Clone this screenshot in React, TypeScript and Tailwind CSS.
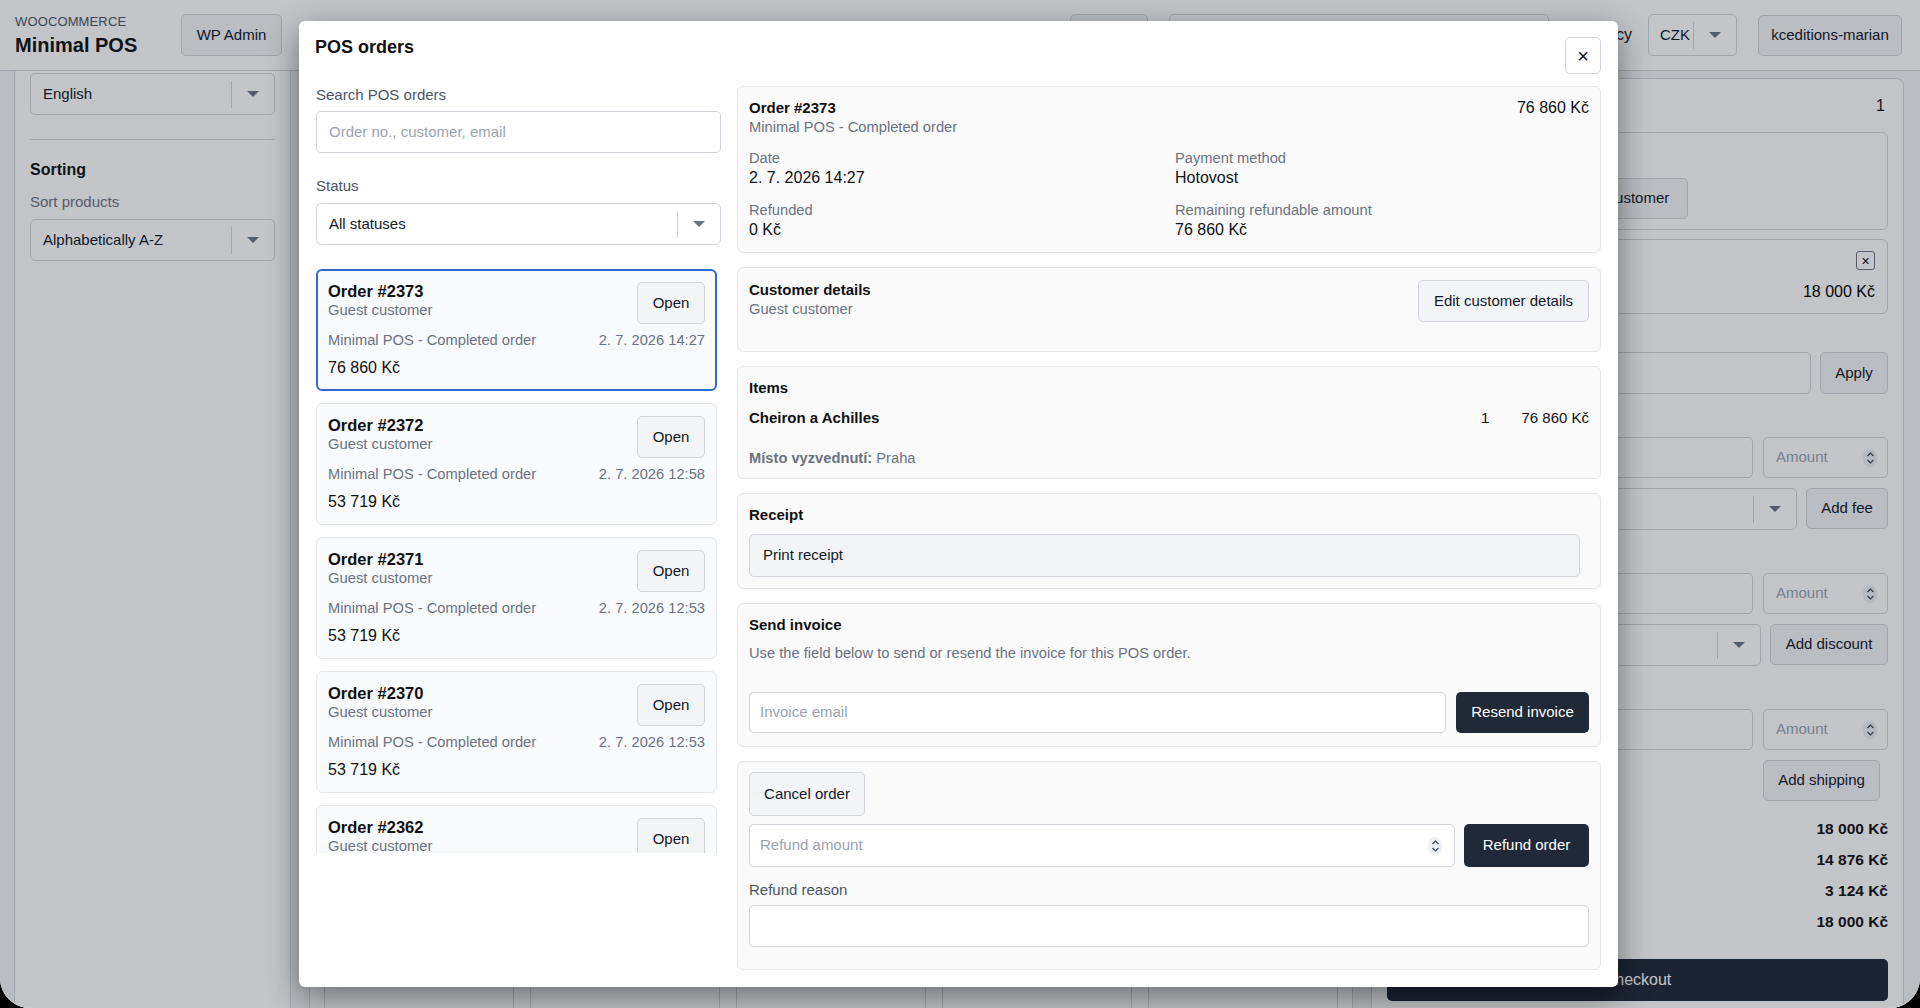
import React from "react";

type Order = {
  id: string;
  date: string;
  total: string;
};

const orders: Order[] = [
  { id: "2373", date: "2. 7. 2026 14:27", total: "76 860 Kč" },
  { id: "2372", date: "2. 7. 2026 12:58", total: "53 719 Kč" },
  { id: "2371", date: "2. 7. 2026 12:53", total: "53 719 Kč" },
  { id: "2370", date: "2. 7. 2026 12:53", total: "53 719 Kč" },
  { id: "2362", date: "2. 7. 2026 12:41", total: "53 719 Kč" },
];

function Caret() {
  return (
    <svg width="12" height="6" viewBox="0 0 12 6">
      <path d="M0 0h12L6 6z" fill="#6b7280" />
    </svg>
  );
}

function Spinner() {
  return (
    <span className="flex h-[18px] w-[14px] items-center justify-center rounded-full bg-[#eef0f2]">
      <svg width="9" height="14" viewBox="0 0 9 14">
        <path d="M1.5 5L4.5 2L7.5 5M1.5 9L4.5 12L7.5 9" stroke="#374151" strokeWidth="1.2" fill="none" />
      </svg>
    </span>
  );
}

function SelectBox({ value, className = "" }: { value: string; className?: string }) {
  return (
    <div
      className={`flex h-[42px] items-center rounded-[5px] border border-[#d1d5db] bg-white pl-3 text-[15px] text-[#111827] ${className}`}
    >
      <span className="flex-1 truncate">{value}</span>
      <span className="h-[27px] w-px bg-[#d1d5db]" />
      <span className="flex w-[42px] justify-center">
        <Caret />
      </span>
    </div>
  );
}

function GrayButton({ children, className = "" }: { children: React.ReactNode; className?: string }) {
  return (
    <button
      className={`flex items-center justify-center rounded-[5px] border border-[#d1d5db] bg-[#f3f4f6] text-[15px] text-[#111827] ${className}`}
    >
      {children}
    </button>
  );
}

function DarkButton({ children, className = "" }: { children: React.ReactNode; className?: string }) {
  return (
    <button
      className={`flex items-center justify-center rounded-[5px] bg-[#1f2937] text-[15px] text-white ${className}`}
    >
      {children}
    </button>
  );
}

function AmountInput() {
  return (
    <div className="flex h-[41px] w-[125px] items-center justify-between rounded-[5px] border border-[#d1d5db] bg-white pl-3 pr-[10px] text-[15px] text-[#9ca3af]">
      Amount
      <Spinner />
    </div>
  );
}

function OrderCard({ order, active }: { order: Order; active: boolean }) {
  return (
    <div
      className={`h-[122px] shrink-0 rounded-[6px] bg-[#f9fafb] ${
        active ? "border-2 border-[#3366d6] p-[10px]" : "border border-[#e5e7eb] p-[11px]"
      }`}
    >
      <div className="flex h-[42px] items-start justify-between">
        <div>
          <p className="text-[16.5px] font-bold leading-5 text-[#111]">Order #{order.id}</p>
          <p className="text-[14.8px] leading-[19px] text-[#6b7280]">Guest customer</p>
        </div>
        <GrayButton className="mt-px h-[42px] w-[68px]">Open</GrayButton>
      </div>
      <div className="mt-2 flex justify-between text-[14.7px] leading-[18px] text-[#6b7280]">
        <span>Minimal POS - Completed order</span>
        <span>{order.date}</span>
      </div>
      <p className="mt-[9px] text-[16px] leading-5 text-[#111]">{order.total}</p>
    </div>
  );
}

function Box({ children, className = "" }: { children: React.ReactNode; className?: string }) {
  return (
    <section className={`shrink-0 rounded-[6px] border border-[#e5e7eb] bg-[#fafafa] px-[11px] ${className}`}>
      {children}
    </section>
  );
}

function Field({ label, value }: { label: string; value: string }) {
  return (
    <div>
      <p className="text-[14.7px] leading-[19px] text-[#6b7280]">{label}</p>
      <p className="text-[16px] leading-5 text-[#111]">{value}</p>
    </div>
  );
}

function OrdersModal() {
  return (
    <div className="-ml-[3px] flex h-[966px] w-[1319px] flex-col rounded-[6px] bg-white px-[17px] pt-[11px] shadow-[0_10px_32px_rgba(0,0,0,0.45)]">
      <div className="flex items-start justify-between">
        <h2 className="-ml-px pt-[2px] text-[18px] font-bold leading-[27px] text-[#111]">POS orders</h2>
        <button className="mt-[5px] flex h-[37px] w-[36px] items-center justify-center rounded-[5px] border border-[#d1d5db] bg-white text-[20px] leading-none text-[#111]">
          ×
        </button>
      </div>

      <div className="mt-[12px] flex gap-4">
        {/* left — search + list */}
        <div className="flex w-[405px] shrink-0 flex-col">
          <label className="text-[15px] leading-[18px] text-[#4b5563]">Search POS orders</label>
          <div className="mt-[7px] flex h-[42px] items-center rounded-[5px] border border-[#d1d5db] bg-white px-3 text-[15px] text-[#9ca3af]">
            Order no., customer, email
          </div>
          <label className="mt-[24px] text-[15px] leading-[18px] text-[#4b5563]">Status</label>
          <SelectBox value="All statuses" className="mt-2" />
          <div className="mt-[24px] flex h-[584px] flex-col gap-3 overflow-hidden pr-[4px]">
            {orders.map((o, i) => (
              <OrderCard key={o.id} order={o} active={i === 0} />
            ))}
          </div>
        </div>

        {/* right — detail */}
        <div className="flex flex-1 flex-col gap-[14px]">
          <Box className="h-[167px] pt-[11px]">
            <div className="flex justify-between">
              <p className="text-[15px] font-bold leading-5 text-[#111]">Order #2373</p>
              <p className="text-[16px] leading-5 text-[#111]">76 860 Kč</p>
            </div>
            <p className="text-[14.7px] leading-[19px] text-[#6b7280]">Minimal POS - Completed order</p>
            <div className="mt-3 grid grid-cols-2 gap-x-3 gap-y-[13px]">
              <Field label="Date" value="2. 7. 2026 14:27" />
              <Field label="Payment method" value="Hotovost" />
              <Field label="Refunded" value="0 Kč" />
              <Field label="Remaining refundable amount" value="76 860 Kč" />
            </div>
          </Box>

          <Box className="h-[85px] pt-[12px]">
            <div className="flex items-start justify-between">
              <div>
                <p className="text-[15px] font-bold leading-5 text-[#111]">Customer details</p>
                <p className="text-[14.7px] leading-[19px] text-[#6b7280]">Guest customer</p>
              </div>
              <GrayButton className="h-[42px] w-[171px]">Edit customer details</GrayButton>
            </div>
          </Box>

          <Box className="h-[113px] pt-[11px]">
            <p className="text-[15px] font-bold leading-5 text-[#111]">Items</p>
            <div className="mt-[10px] flex justify-between text-[15px] leading-5 text-[#111]">
              <span className="font-bold">Cheiron a Achilles</span>
              <span className="flex gap-[32px]">
                <span>1</span>
                <span>76 860 Kč</span>
              </span>
            </div>
            <p className="mt-[21px] text-[14.7px] leading-[18px] text-[#6b7280]">
              <span className="font-bold">Místo vyzvednutí:</span> Praha
            </p>
          </Box>

          <Box className="h-[96px] pt-[11px]">
            <p className="text-[15px] font-bold leading-5 text-[#111]">Receipt</p>
            <button className="mr-[9px] mt-[9px] flex h-[43px] w-[calc(100%-9px)] items-center rounded-[5px] border border-[#d1d5db] bg-[#f3f4f6] px-[13px] text-[15px] text-[#111827]">
              Print receipt
            </button>
          </Box>

          <Box className="h-[144px] pt-[11px]">
            <p className="text-[15px] font-bold leading-5 text-[#111]">Send invoice</p>
            <p className="mt-[9px] text-[14.7px] leading-[18px] text-[#6b7280]">
              Use the field below to send or resend the invoice for this POS order.
            </p>
            <div className="mt-[30px] flex gap-[10px]">
              <div className="flex h-[41px] flex-1 items-center rounded-[5px] border border-[#d1d5db] bg-white px-[10px] text-[15px] text-[#9ca3af]">
                Invoice email
              </div>
              <DarkButton className="h-[41px] w-[133px]">Resend invoice</DarkButton>
            </div>
          </Box>

          <Box className="h-[209px] pt-[10px]">
            <GrayButton className="h-[44px] w-[116px]">Cancel order</GrayButton>
            <div className="mt-2 flex gap-[9px]">
              <div className="flex h-[43px] flex-1 items-center justify-between rounded-[5px] border border-[#d1d5db] bg-white pl-[10px] pr-[12px] text-[15px] text-[#9ca3af]">
                Refund amount
                <Spinner />
              </div>
              <DarkButton className="h-[43px] w-[125px]">Refund order</DarkButton>
            </div>
            <p className="mt-[14px] text-[15px] leading-[18px] text-[#4b5563]">Refund reason</p>
            <div className="mt-[6px] h-[42px] rounded-[5px] border border-[#d1d5db] bg-white" />
          </Box>
        </div>
      </div>
    </div>
  );
}

function PageBehind() {
  return (
    <div className="flex h-full flex-col">
      {/* header */}
      <header className="flex h-[71px] shrink-0 items-center border-b border-[#d1d5db] bg-white pl-[15px] pr-[18px]">
        <div className="flex w-[166px] flex-col">
          <span className="text-[13px] leading-4 tracking-[0.01em] text-[#4b5563]">WOOCOMMERCE</span>
          <span className="mt-[3px] text-[20px] font-bold leading-6 text-[#111]">Minimal POS</span>
        </div>
        <GrayButton className="h-[42px] w-[101px]">WP Admin</GrayButton>
        <div className="ml-auto flex items-center">
          <GrayButton className="h-[42px] w-[78px]">Orders</GrayButton>
          <div className="ml-[21px] h-[42px] w-[380px] rounded-[5px] border border-[#d1d5db] bg-white" />
          <span className="ml-[18px] text-[16px] text-[#111]">Currency</span>
          <SelectBox value="CZK" className="ml-4 w-[89px] pl-[11px]" />
          <GrayButton className="ml-[21px] h-[41px] w-[144px] text-[#4b5563]">kceditions-marian</GrayButton>
        </div>
      </header>

      <div className="flex flex-1 bg-[#f3f4f6]">
        {/* sidebar */}
        <aside className="ml-[14px] w-[277px] shrink-0 border-x border-[#d1d5db] bg-white px-[15px] pt-[2px]">
          <SelectBox value="English" />
          <div className="mt-[24px] h-px bg-[#d1d5db]" />
          <p className="mt-[20px] text-[16px] font-bold leading-5 text-[#111]">Sorting</p>
          <p className="mt-[12px] text-[15px] leading-5 text-[#6b7280]">Sort products</p>
          <SelectBox value="Alphabetically A-Z" className="mt-[7px] h-[41px]" />
        </aside>

        {/* product grid */}
        <main className="flex-1 px-[18px] pt-[7px]">
          <div className="h-full rounded-t-[8px] border border-[#d1d5db] bg-white p-[14px]">
            <div className="grid grid-cols-5 gap-4">
              {Array.from({ length: 15 }).map((_, i) => (
                <div key={i} className="h-[300px] rounded-[6px] border border-[#d1d5db] bg-white" />
              ))}
            </div>
          </div>
        </main>

        {/* cart */}
        <aside className="mr-[16px] mt-[7px] flex w-[533px] shrink-0 flex-col rounded-t-[8px] border border-[#d1d5db] bg-white px-[15px]">
          <div className="flex h-[53px] items-center justify-between text-[16px] text-[#111]">
            <span className="font-bold">Cart</span>
            <span className="pr-[3px]">1</span>
          </div>
          <div className="h-[98px] rounded-[6px] border border-[#d1d5db] px-3 pt-[8px]">
            <p className="text-[15px] font-bold">Customer</p>
            <div className="mt-[14px] flex gap-2">
              <GrayButton className="h-[41px] w-[135px]">New customer</GrayButton>
              <GrayButton className="h-[41px] w-[145px]">Select customer</GrayButton>
            </div>
          </div>
          <div className="mt-[9px] flex h-[75px] justify-between rounded-[6px] border border-[#d1d5db] px-3 pt-[11px]">
            <p className="text-[15px] font-bold">Cheiron a Achilles</p>
            <div className="flex flex-col items-end">
              <span className="flex h-[19px] w-[19px] items-center justify-center rounded-[3px] border border-[#6b7280] text-[14px] leading-none">
                ×
              </span>
              <span className="mt-[10px] text-[16px]">18 000 Kč</span>
            </div>
          </div>
          <div className="mt-[38px] flex gap-[9px]">
            <div className="h-[42px] flex-1 rounded-[5px] border border-[#d1d5db]" />
            <GrayButton className="h-[42px] w-[68px]">Apply</GrayButton>
          </div>
          <div className="mt-[43px] flex gap-[10px]">
            <div className="h-[41px] flex-1 rounded-[5px] border border-[#d1d5db]" />
            <AmountInput />
          </div>
          <div className="mt-[10px] flex gap-[9px]">
            <SelectBox value="" className="h-[41px] flex-1" />
            <GrayButton className="h-[41px] w-[82px]">Add fee</GrayButton>
          </div>
          <div className="mt-[43px] flex gap-[10px]">
            <div className="h-[41px] flex-1 rounded-[5px] border border-[#d1d5db]" />
            <AmountInput />
          </div>
          <div className="mt-[10px] flex gap-[9px]">
            <SelectBox value="" className="h-[41px] flex-1" />
            <GrayButton className="h-[41px] w-[118px]">Add discount</GrayButton>
          </div>
          <div className="mt-[43px] flex gap-[10px]">
            <div className="h-[41px] flex-1 rounded-[5px] border border-[#d1d5db]" />
            <AmountInput />
          </div>
          <div className="mt-[10px] flex justify-end pr-[8px]">
            <GrayButton className="h-[41px] w-[117px]">Add shipping</GrayButton>
          </div>
          <div className="mt-[12px] flex flex-col text-[15.5px] text-[#111]">
            {[
              ["Subtotal", "18 000 Kč"],
              ["Without VAT", "14 876 Kč"],
              ["VAT", "3 124 Kč"],
              ["Total", "18 000 Kč"],
            ].map(([k, v]) => (
              <div key={k} className="flex h-[31px] items-center justify-between">
                <span>{k}</span>
                <span className="font-bold">{v}</span>
              </div>
            ))}
          </div>
          <DarkButton className="mt-[22px] h-[42px] w-full text-[16px]">Checkout</DarkButton>
        </aside>
      </div>
    </div>
  );
}

export default function App() {
  return (
    <div className="h-[1008px] w-[1920px] overflow-hidden bg-black font-['Liberation_Sans',Arial,sans-serif]">
      <div className="relative h-full w-full overflow-hidden rounded-b-[30px] bg-[#f3f4f6]">
        <PageBehind />
        <div className="absolute inset-0 flex items-center justify-center bg-[rgba(17,24,39,0.25)]">
          <OrdersModal />
        </div>
      </div>
    </div>
  );
}
